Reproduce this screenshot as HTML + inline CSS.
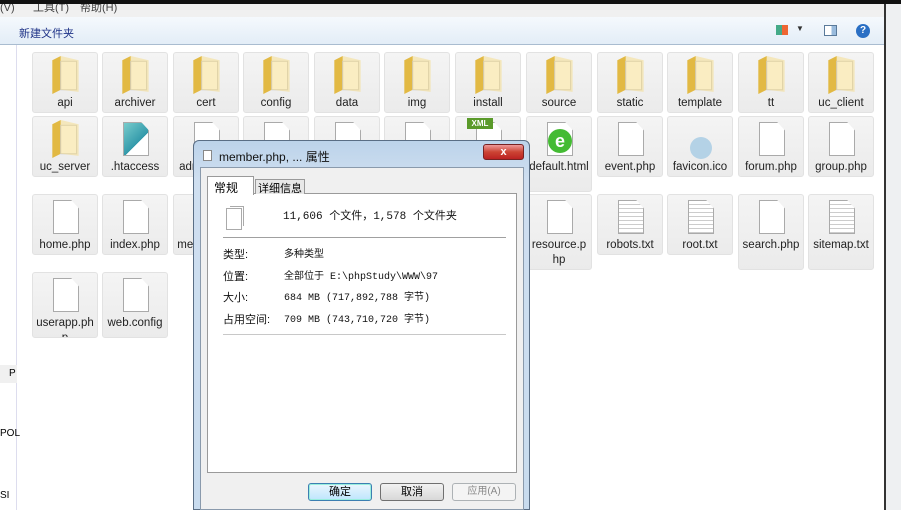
<!DOCTYPE html>
<html><head><meta charset="utf-8"><style>
*{margin:0;padding:0;box-sizing:border-box}
body{width:901px;height:510px;overflow:hidden;background:#fff;font-family:"Liberation Sans","Noto Sans CJK SC",sans-serif;position:relative}
.abs{position:absolute}
.tile{position:absolute;width:66px;background:linear-gradient(#f4f4f4,#ebebeb);border:1px solid #e2e2e2;border-radius:3px;font-size:11.5px;color:#222;text-align:center;line-height:15px;overflow:hidden}
.tile .lbl{position:absolute;left:2px;right:2px;top:43px;word-break:break-all}
.doc{position:absolute;left:20px;top:5px;width:26px;height:34px;background:#fff;border:1px solid #aaa;clip-path:polygon(0 0,70% 0,100% 25%,100% 100%,0 100%)}
.fold{position:absolute;left:17px;top:2px;width:32px;height:40px}
</style></head><body>
<div class="abs" style="left:0;top:0;width:901px;height:4px;background:#111"></div>
<div class="abs" style="left:0;top:4px;width:884px;height:13px;background:#f0f0f0;font-size:11px;line-height:8px;color:#444;overflow:hidden">
<span class="abs" style="left:0;top:0">(V)</span><span class="abs" style="left:33px;top:0">工具(T)</span><span class="abs" style="left:80px;top:0">帮助(H)</span></div>
<div class="abs" style="left:0;top:17px;width:884px;height:28px;background:linear-gradient(#f5f9fd,#e3edf7);border-bottom:1px solid #a9bcd0;font-size:11px;color:#1e3287">
<span class="abs" style="left:19px;top:8px">新建文件夹</span>
<div class="abs" style="left:776px;top:8px;width:12px;height:10px;background:linear-gradient(90deg,#4a8 50%,#e63 50%)"></div>
<span class="abs" style="left:796px;top:7px;font-size:8px;color:#333">▼</span>
<div class="abs" style="left:824px;top:8px;width:13px;height:11px;border:1px solid #5a7a9a;background:linear-gradient(90deg,#fff 60%,#9bd 60%)"></div>
<div class="abs" style="left:856px;top:7px;width:14px;height:14px;border-radius:50%;background:#2a6fc4;color:#fff;font-size:10px;font-weight:bold;text-align:center;line-height:14px">?</div>
</div>
<div class="abs" style="left:0;top:45px;width:17px;height:465px;background:#fff;border-right:1px solid #dde"></div>
<div class="abs" style="left:0;top:365px;width:17px;height:18px;background:#f0f0f0;font-size:10px;line-height:18px;padding-left:9px">P</div>
<div class="abs" style="left:0;top:428px;font-size:10px">POL</div>
<div class="abs" style="left:0;top:490px;font-size:10px">SI</div>
<div class="abs" style="left:884px;top:4px;width:2px;height:506px;background:#333"></div>
<div class="abs" style="left:886px;top:4px;width:15px;height:506px;background:#eef0f2"></div>

<div id="tiles"></div>
<script>
const F='<svg class="fold" viewBox="0 0 30 38"><path d="M2 5 L10 1 L10 33 L2 37Z" fill="#e2b943"/><rect x="10" y="6" width="15" height="27" fill="#fff" stroke="#ccc"/><path d="M10 1 L27 5 L27 35 L10 33Z" fill="#f6dc86" opacity=".5"/></svg>';
const D='<div class="doc"></div>';
const T='<div class="doc" style="background:repeating-linear-gradient(#fff 0 3px,#ccc 3px 4px)"></div>';
const cols=[32,102,173,243,314,384,455,526,597,667,738,808];
const r1=['api','archiver','cert','config','data','img','install','source','static','template','tt','uc_client'];
let h='';
r1.forEach((n,i)=>h+=`<div class="tile" style="left:${cols[i]}px;top:52px;height:61px">${F}<div class="lbl">${n}</div></div>`);
const r2=[['uc_server',F],['.htaccess','<div class="doc" style="background:linear-gradient(135deg,#7cc 0,#39a 60%,#fff 60%)"></div>'],['admin.php',D],['',D],['',D],['',D],['',D],['default.html','<div class="doc"></div><div style="position:absolute;left:21px;top:12px;width:24px;height:24px;border-radius:50%;background:#4b3;color:#fff;font-weight:bold;font-size:18px;line-height:24px">e</div>'],['event.php',D],['favicon.ico','<div style="position:absolute;left:22px;top:20px;width:22px;height:22px;border-radius:50%;background:#b4d2e6"></div>'],['forum.php',D],['group.php',D]];
r2.forEach((n,i)=>h+=`<div class="tile" style="left:${cols[i]}px;top:116px;height:${i==7?76:61}px">${n[1]}<div class="lbl">${n[0]}</div></div>`);
const r3=[['home.php',D],['index.php',D],['member.php',D],null,null,null,null,['resource.php',D],['robots.txt',T],['root.txt',T],['search.php',D],['sitemap.txt',T]];
r3.forEach((n,i)=>{if(n)h+=`<div class="tile" style="left:${cols[i]}px;top:194px;height:${[7,10,11].includes(i)?76:61}px">${n[1]}<div class="lbl">${n[0]}</div></div>`});
[['userapp.php',0],['web.config',1]].forEach(n=>h+=`<div class="tile" style="left:${cols[n[1]]}px;top:272px;height:66px">${D}<div class="lbl">${n[0]}</div></div>`);
document.getElementById('tiles').innerHTML=h;
</script>
<div class="abs" style="left:467px;top:118px;width:26px;height:11px;background:#5a9a2a;color:#fff;font-size:8px;font-weight:bold;text-align:center;line-height:11px">XML</div>

<div class="abs" style="left:193px;top:140px;width:337px;height:370px;background:linear-gradient(#bcd3ea,#cfdff0 40px,#c8dbee);border:1px solid #5a6e85;border-radius:6px 6px 0 0">
<div class="abs" style="left:9px;top:9px;width:9px;height:11px;border:1px solid #888;background:#fff"></div>
<span class="abs" style="left:25px;top:7px;font-size:12px;color:#111">member.php, ... 属性</span>
<div class="abs" style="left:289px;top:3px;width:41px;height:16px;border-radius:3px;background:linear-gradient(#e99,#c43 50%,#b22);border:1px solid #722;color:#fff;font-size:11px;font-weight:bold;text-align:center;line-height:14px">x</div>
<div class="abs" style="left:6px;top:26px;width:324px;height:343px;background:#f0f0f0;border:1px solid #8a9aac"></div>
<div class="abs" style="left:13px;top:52px;width:310px;height:280px;background:#fff;border:1px solid #9a9a9a"></div>
<div class="abs" style="left:13px;top:35px;width:47px;height:19px;background:#fff;border:1px solid #9a9a9a;border-bottom:none;font-size:12px;padding:2px 0 0 6px">常规</div>
<div class="abs" style="left:61px;top:38px;width:50px;height:15px;background:#e8e8e8;border:1px solid #9a9a9a;border-bottom:none;font-size:11px;padding-left:2px">详细信息</div>
<div class="abs" style="left:32px;top:67px;width:16px;height:22px;border:1px solid #aaa;background:#fff;box-shadow:2px -2px 0 -1px #fff,3px -3px 0 -1px #aaa"></div>
<div class="abs" style="left:89px;top:66px;font-size:11px;color:#111;font-family:'Liberation Mono','Noto Sans CJK SC',monospace">11,606 个文件，1,578 个文件夹</div>
<div class="abs" style="left:29px;top:96px;width:283px;height:1px;background:#a0a0a0"></div>
<div class="abs" style="left:29px;top:104px;font-size:11px;line-height:21.5px;color:#111">类型:<br>位置:<br>大小:<br>占用空间:</div>
<div class="abs" style="left:90px;top:104px;line-height:21.5px;color:#111;font-family:'Liberation Mono','Noto Sans CJK SC',monospace;font-size:10px">多种类型<br>全部位于 E:\phpStudy\WWW\97<br>684 MB (717,892,788 字节)<br>709 MB (743,710,720 字节)</div>
<div class="abs" style="left:29px;top:193px;width:283px;height:1px;background:#c8c8c8"></div>
<div class="abs" style="left:114px;top:342px;width:64px;height:18px;border:1px solid #3c7fb1;border-radius:3px;background:linear-gradient(#eaf6fd,#bee6fd);font-size:11px;text-align:center;line-height:16px;box-shadow:inset 0 0 0 1px #9ed">确定</div>
<div class="abs" style="left:186px;top:342px;width:64px;height:18px;border:1px solid #707070;border-radius:3px;background:linear-gradient(#f2f2f2,#d8d8d8);font-size:11px;text-align:center;line-height:16px">取消</div>
<div class="abs" style="left:258px;top:342px;width:64px;height:18px;border:1px solid #adb2b5;border-radius:3px;background:#f4f4f4;color:#888;font-size:10px;text-align:center;line-height:16px">应用(A)</div>
</div>
</body></html>
